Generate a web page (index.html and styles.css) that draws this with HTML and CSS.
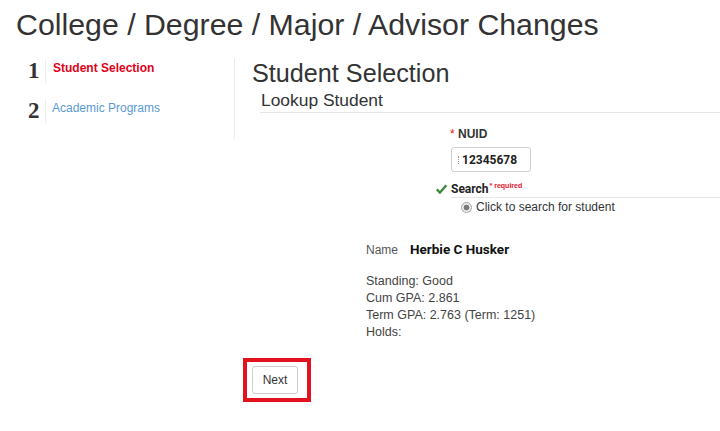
FILE: index.html
```html
<!DOCTYPE html>
<html>
<head>
<meta charset="utf-8">
<link rel="stylesheet" href="styles.css">
</head>
<body>
<h1 class="page-title">College / Degree / Major / Advisor Changes</h1>
<div class="main">
  <div class="steps">
    <div class="step">
      <div class="step-num">1</div>
      <div class="step-label active">Student Selection</div>
    </div>
    <div class="step step-next">
      <div class="step-num">2</div>
      <div class="step-label link">Academic Programs</div>
    </div>
  </div>
  <div class="content">
    <h2 class="section-title">Student Selection</h2>
    <div class="lookup">
      <h3 class="lookup-title">Lookup Student</h3>
      <div class="form">
        <div class="field-label"><span class="req">*</span> NUID</div>
        <div class="input"><span class="caret"></span><span class="value">12345678</span></div>
        <div class="search-label">
          <svg class="check" width="11" height="10" viewBox="0 0 11 10"><path d="M0.8 5.4 L3.9 8.6 L10.3 1.2" fill="none" stroke="#3d8a38" stroke-width="2.3" stroke-linejoin="miter"/></svg>
          <span class="search-text">Search</span><span class="required">* required</span>
        </div>
        <div class="radio-row"><span class="radio"></span><span class="radio-text">Click to search for student</span></div>
      </div>
      <div class="info">
        <div class="name-row"><span class="name-label">Name</span><span class="name-value">Herbie C Husker</span></div>
        <div class="details">
          <div>Standing: Good</div>
          <div>Cum GPA: 2.861</div>
          <div>Term GPA: 2.763 (Term: 1251)</div>
          <div>Holds:</div>
        </div>
      </div>
    </div>
    <div class="actions">
      <div class="btn-wrap">
        <button class="btn">Next</button>
        <span class="highlight"></span>
      </div>
    </div>
  </div>
</div>
</body>
</html>
```
FILE: styles.css
```css
* { box-sizing: border-box; }
html, body { margin: 0; padding: 0; background: #fff; }
html { overflow: hidden; }
body {
  font-family: "Liberation Sans", Arial, sans-serif;
  color: #333;
  width: 720px;
  padding-bottom: 20px;
}
.page-title {
  margin: 7px 0 0 0;
  padding-left: 16px;
  font-size: 30.3px;
  line-height: 36px;
  font-weight: normal;
  color: #333;
  white-space: nowrap;
}
.main {
  display: flex;
  margin-top: 15px;
}
.steps {
  width: 235px;
  flex: none;
  align-self: flex-start;
  border-right: 1px solid #ebebeb;
  padding: 1px 0 16px 28px;
}
.step {
  display: flex;
  height: 24px;
}
.step-next { margin-top: 16px; }
.step-num {
  width: 17px;
  font-family: "Liberation Serif", "Times New Roman", serif;
  font-weight: bold;
  font-size: 23px;
  line-height: 24px;
  color: #333;
}
.step-label {
  border-left: 1px solid #ececec;
  padding: 1px 0 0 7px;
  font-size: 12px;
  line-height: 16px;
}
.step-label.active { color: #e1001a; font-weight: bold; }
.step-label.link { color: #5a9ad6; padding-left: 6px; }
.content {
  flex: 1;
  min-width: 0;
}
.section-title {
  margin: 0;
  padding-left: 17px;
  font-size: 25.2px;
  line-height: 30px;
  font-weight: normal;
  color: #333;
  white-space: nowrap;
}
.lookup { margin-left: 25px; }
.lookup-title {
  margin: 2px 0 0 0;
  padding: 0 0 2px 1px;
  font-size: 17.4px;
  line-height: 20px;
  font-weight: normal;
  color: #333;
  border-bottom: 1px solid #e6e6e6;
}
.form { margin-left: 191px; }
.field-label {
  margin-top: 13px;
  margin-left: -1px;
  font-size: 12px;
  line-height: 16px;
  font-weight: bold;
  color: #333;
}
.req { color: #e8132b; font-weight: normal; }
.input {
  margin-top: 5px;
  width: 80px;
  height: 25px;
  border: 1px solid #cfcfcf;
  border-radius: 3px;
  display: flex;
  align-items: center;
  padding-left: 6px;
}
.caret {
  width: 1px;
  height: 8px;
  border-left: 1px dotted #9a9a9a;
  margin-right: 3px;
}
.value {
  font-family: Roboto, "Liberation Sans", sans-serif;
  font-weight: bold;
  font-size: 12px;
  color: #222;
}
.search-label {
  margin-top: 10px;
  display: flex;
  align-items: flex-start;
  line-height: 15px;
  border-bottom: 1px solid #e6e6e6;
}
.check {
  margin-left: -15px;
  margin-right: 4px;
  margin-top: 2px;
  flex: none;
}
.search-text {
  font-family: Roboto, "Liberation Sans", sans-serif;
  font-weight: bold;
  font-size: 12px;
  color: #222;
}
.required {
  font-size: 7px;
  font-weight: bold;
  color: #e8132b;
  line-height: 8px;
  margin-left: 1px;
}
.radio-row {
  padding: 1px 0 0 10px;
  display: flex;
  align-items: center;
  height: 17px;
  font-size: 12px;
  line-height: 16px;
  color: #333;
}
.radio {
  width: 11px;
  height: 11px;
  border-radius: 50%;
  border: 1px solid #a5a5a5;
  background: radial-gradient(circle, #7a7a7a 0 2.6px, #ececec 3.2px);
  margin-right: 4px;
  flex: none;
}
.info {
  margin-left: 106px;
  margin-top: 26px;
}
.name-row {
  display: flex;
  align-items: baseline;
  height: 16px;
  line-height: 16px;
}
.name-label {
  width: 44px;
  flex: none;
  white-space: nowrap;
  font-size: 12px;
  color: #555;
}
.name-value {
  font-family: Roboto, "Liberation Sans", sans-serif;
  font-weight: bold;
  font-size: 13.5px;
  color: #111;
}
.details {
  margin-top: 16px;
  font-size: 12.5px;
  line-height: 17px;
  color: #444;
}
.actions {
  padding-left: 17px;
  margin-top: 25px;
}
.btn-wrap {
  position: relative;
  display: inline-block;
}
.btn {
  display: block;
  width: 46px;
  height: 28px;
  margin: 0;
  padding: 0;
  border: 1px solid #cccccc;
  border-radius: 3px;
  background: #fff;
  font-family: "Liberation Sans", Arial, sans-serif;
  font-size: 12px;
  color: #333;
}
.highlight {
  position: absolute;
  left: -9px;
  top: -8px;
  width: 68px;
  height: 44px;
  border: 4px solid #e3121f;
}
```
